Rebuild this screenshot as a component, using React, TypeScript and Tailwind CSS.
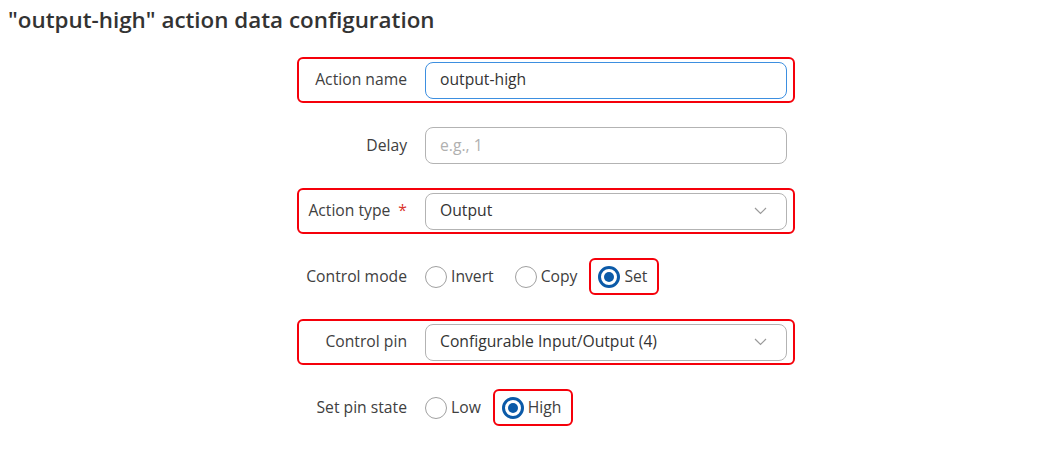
import { ReactNode } from 'react'

function Row({
  label,
  required,
  highlighted,
  children,
}: {
  label: string
  required?: boolean
  highlighted?: boolean
  children: ReactNode
}) {
  return (
    <div
      className={`flex h-[46px] w-[498px] items-center rounded-[6px] border-2 pr-[6px] ${
        highlighted ? 'border-[#f5000a]' : 'border-transparent'
      }`}
    >
      <div className="w-[108px] text-right text-[15.7px] text-[#404040]">
        {label}
        {required ? <span className="ml-[8px] text-[#d9342b]">*</span> : null}
      </div>
      <div className="ml-[18px] flex flex-1 items-center">{children}</div>
    </div>
  )
}

function TextInput({ value, placeholder, focused }: { value?: string; placeholder?: string; focused?: boolean }) {
  return (
    <div
      className={`flex h-[37px] w-[362px] items-center rounded-[8px] border px-[14px] text-[15.7px] ${
        focused ? 'border-[#3d8fe0]' : 'border-[#b3b3b3]'
      }`}
    >
      {value ? (
        <span className="text-[#333]">{value}</span>
      ) : (
        <span className="text-[#b0b0b0]">{placeholder}</span>
      )}
    </div>
  )
}

function Select({ value }: { value: string }) {
  return (
    <div className="flex h-[37px] w-[362px] items-center justify-between rounded-[8px] border border-[#b3b3b3] pl-[14px] pr-[19px] text-[15.7px] text-[#333]">
      <span>{value}</span>
      <svg width="13" height="8" viewBox="0 0 13 8" fill="none">
        <path d="M1 1l5.5 5.5L12 1" stroke="#9a9a9a" strokeWidth="1.2" />
      </svg>
    </div>
  )
}

function Radio({ label, checked }: { label: string; checked?: boolean }) {
  return (
    <div
      className={`flex h-[37px] items-center gap-[4px] rounded-[6px] border-2 pl-[7px] pr-[10px] ${
        checked ? 'border-[#f5000a]' : 'border-transparent'
      }`}
    >
      {checked ? (
        <span className="flex h-[22px] w-[22px] items-center justify-center rounded-full border-[3px] border-[#0b5aa8]">
          <span className="h-[10px] w-[10px] rounded-full bg-[#0b5aa8]" />
        </span>
      ) : (
        <span className="h-[22px] w-[22px] rounded-full border border-[#a0a0a0] bg-white" />
      )}
      <span className="text-[15.7px] text-[#404040]">{label}</span>
    </div>
  )
}

export default function App() {
  return (
    <main
      className="h-[453px] w-[1060px] bg-white"
      style={{ fontFamily: '"Open Sans", "Liberation Sans", sans-serif' }}
    >
      <h1 className="pl-[8px] pt-[4px] text-[22.4px] font-semibold leading-[31px] text-[#333]">
        "output-high" action data configuration
      </h1>

      <div className="ml-[297px] mt-[22px] flex flex-col gap-[19.5px]">
        <Row label="Action name" highlighted>
          <TextInput value="output-high" focused />
        </Row>

        <Row label="Delay">
          <TextInput placeholder="e.g., 1" />
        </Row>

        <Row label="Action type" required highlighted>
          <Select value="Output" />
        </Row>

        <Row label="Control mode">
          <div className="-ml-[9px] flex items-center">
            <Radio label="Invert" />
            <Radio label="Copy" />
            <Radio label="Set" checked />
          </div>
        </Row>

        <Row label="Control pin" highlighted>
          <Select value="Configurable Input/Output (4)" />
        </Row>

        <Row label="Set pin state">
          <div className="-ml-[9px] flex items-center">
            <Radio label="Low" />
            <Radio label="High" checked />
          </div>
        </Row>
      </div>
    </main>
  )
}
